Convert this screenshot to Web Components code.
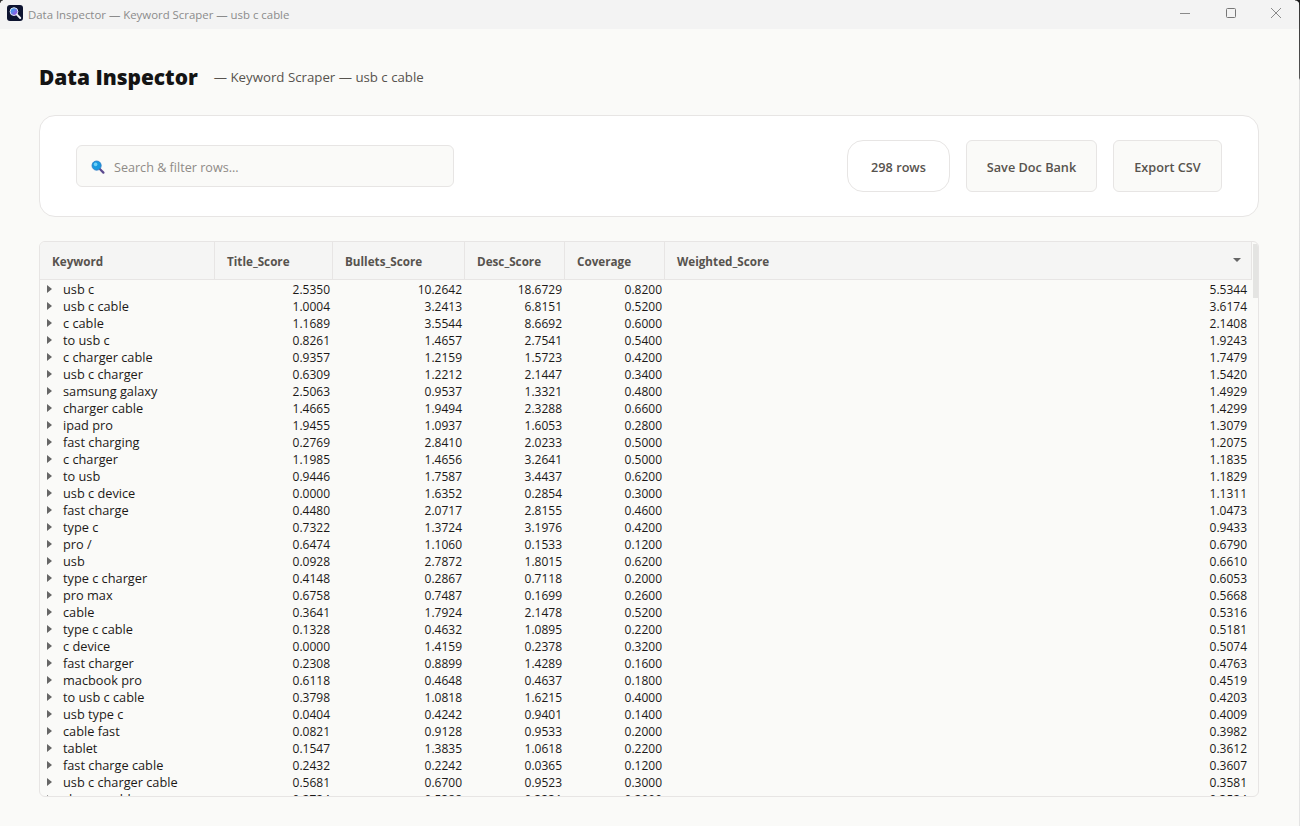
<!DOCTYPE html>
<html>
<head>
<meta charset="utf-8">
<title>Data Inspector</title>
<style>
  html, body { margin: 0; height: 100%; overflow: hidden; background: #fafaf8; }
  body { font-family: "Open Sans", "Noto Sans", sans-serif; }
</style>
</head>
<body>
<app-window label="Data Inspector — Keyword Scraper — usb c cable">
  <page-heading sub="— Keyword Scraper — usb c cable">Data Inspector</page-heading>
  <tool-bar rows="298 rows"></tool-bar>
  <data-grid></data-grid>
</app-window>

<script>
const ROWS = [
  ['usb c', '2.5350', '10.2642', '18.6729', '0.8200', '5.5344'],
  ['usb c cable', '1.0004', '3.2413', '6.8151', '0.5200', '3.6174'],
  ['c cable', '1.1689', '3.5544', '8.6692', '0.6000', '2.1408'],
  ['to usb c', '0.8261', '1.4657', '2.7541', '0.5400', '1.9243'],
  ['c charger cable', '0.9357', '1.2159', '1.5723', '0.4200', '1.7479'],
  ['usb c charger', '0.6309', '1.2212', '2.1447', '0.3400', '1.5420'],
  ['samsung galaxy', '2.5063', '0.9537', '1.3321', '0.4800', '1.4929'],
  ['charger cable', '1.4665', '1.9494', '2.3288', '0.6600', '1.4299'],
  ['ipad pro', '1.9455', '1.0937', '1.6053', '0.2800', '1.3079'],
  ['fast charging', '0.2769', '2.8410', '2.0233', '0.5000', '1.2075'],
  ['c charger', '1.1985', '1.4656', '3.2641', '0.5000', '1.1835'],
  ['to usb', '0.9446', '1.7587', '3.4437', '0.6200', '1.1829'],
  ['usb c device', '0.0000', '1.6352', '0.2854', '0.3000', '1.1311'],
  ['fast charge', '0.4480', '2.0717', '2.8155', '0.4600', '1.0473'],
  ['type c', '0.7322', '1.3724', '3.1976', '0.4200', '0.9433'],
  ['pro /', '0.6474', '1.1060', '0.1533', '0.1200', '0.6790'],
  ['usb', '0.0928', '2.7872', '1.8015', '0.6200', '0.6610'],
  ['type c charger', '0.4148', '0.2867', '0.7118', '0.2000', '0.6053'],
  ['pro max', '0.6758', '0.7487', '0.1699', '0.2600', '0.5668'],
  ['cable', '0.3641', '1.7924', '2.1478', '0.5200', '0.5316'],
  ['type c cable', '0.1328', '0.4632', '1.0895', '0.2200', '0.5181'],
  ['c device', '0.0000', '1.4159', '0.2378', '0.3200', '0.5074'],
  ['fast charger', '0.2308', '0.8899', '1.4289', '0.1600', '0.4763'],
  ['macbook pro', '0.6118', '0.4648', '0.4637', '0.1800', '0.4519'],
  ['to usb c cable', '0.3798', '1.0818', '1.6215', '0.4000', '0.4203'],
  ['usb type c', '0.0404', '0.4242', '0.9401', '0.1400', '0.4009'],
  ['cable fast', '0.0821', '0.9128', '0.9533', '0.2000', '0.3982'],
  ['tablet', '0.1547', '1.3835', '1.0618', '0.2200', '0.3612'],
  ['fast charge cable', '0.2432', '0.2242', '0.0365', '0.1200', '0.3607'],
  ['usb c charger cable', '0.5681', '0.6700', '0.9523', '0.3000', '0.3581'],
  ['charge cable', '0.2724', '0.5388', '0.3331', '0.2000', '0.3524'],
];
const COLUMNS = ['Keyword', 'Title_Score', 'Bullets_Score', 'Desc_Score', 'Coverage', 'Weighted_Score'];

// window frame with the fake title bar
class AppWindow extends HTMLElement {
  constructor() {
    super();
    this.attachShadow({ mode: 'open' });
    const label = this.getAttribute('label');
    this.shadowRoot.innerHTML = `
      <style>
        :host { display: flex; flex-direction: column; height: 826px; background: #fafaf8; position: relative; overflow: hidden; }
        .bar { flex: none; height: 29px; background: #f3f3f3; display: flex; align-items: center; padding-left: 7px; }
        .bar svg.logo { flex: none; width: 16px; height: 16px; margin: 0 5px 3px 0; }
        .name { flex: 1; font-size: 11.4px; color: #8b8b8b; white-space: nowrap; margin-bottom: 1px; }
        .ctl { flex: none; width: 45.5px; height: 26px; display: flex; align-items: center; justify-content: center; }
        .ctl svg { width: 12px; height: 12px; }
        .ctls { display: flex; margin: 0 1px 3px 0; }
        main { flex: 1; min-height: 0; display: flex; flex-direction: column; padding: 31px 41px 29px 39px; }
        .corner { position: absolute; top: 0; pointer-events: none; }
        .corner.l { left: 0; width: 3px; height: 3px; background: radial-gradient(circle at 100% 100%, transparent 2px, #2a2a2a 3px); }
        .corner.r { right: 0; width: 5px; height: 5px; background: radial-gradient(circle at 0 100%, transparent 4px, #1b1b1b 5px); }
        .edge { position: absolute; right: 0; top: 0; bottom: 0; width: 1px; background: linear-gradient(#333 0, #555 78px, #dedede 80px, #e4e4e4 100%); }
      </style>
      <div class="bar">
        <svg class="logo" viewBox="0 0 16 16">
          <rect width="16" height="16" rx="3" fill="#0d1330"/>
          <defs><linearGradient id="lg" x1="0" y1="0" x2="1" y2="1"><stop offset="0" stop-color="#22b8f0"/><stop offset="1" stop-color="#b13be0"/></linearGradient></defs>
          <circle cx="7" cy="6.6" r="3.9" fill="url(#lg)" stroke="#dfe6f2" stroke-width="1"/>
          <path d="M10 9.6 L13.2 13" stroke="#eef1f6" stroke-width="2" stroke-linecap="round"/>
        </svg>
        <div class="name">${label}</div>
        <div class="ctls">
          <div class="ctl"><svg viewBox="0 0 12 12"><path d="M1 6.5H11" stroke="#8a8a8a" fill="none"/></svg></div>
          <div class="ctl"><svg viewBox="0 0 12 12"><rect x="1.5" y="1.5" width="9" height="9" rx="1" stroke="#777" fill="none"/></svg></div>
          <div class="ctl"><svg viewBox="0 0 12 12"><path d="M1 1L11 11M11 1L1 11" stroke="#8a8a8a" fill="none"/></svg></div>
        </div>
      </div>
      <main><slot></slot></main>
      <div class="edge"></div>
      <div class="corner l"></div><div class="corner r"></div>
    `;
  }
}

class PageHeading extends HTMLElement {
  constructor() {
    super();
    this.attachShadow({ mode: 'open' });
    this.shadowRoot.innerHTML = `
      <style>
        :host { display: flex; align-items: center; height: 34px; margin-bottom: 21px; flex: none; }
        h1 { margin: 0; font: 800 20.9px "Open Sans", sans-serif; color: #141414; }
        span { margin-left: 16px; font-size: 13.25px; color: #57534e; }
      </style>
      <h1><slot></slot></h1><span>${this.getAttribute('sub')}</span>
    `;
  }
}

class ToolBar extends HTMLElement {
  constructor() {
    super();
    this.attachShadow({ mode: 'open' });
    this.shadowRoot.innerHTML = `
      <style>
        :host { display: flex; flex: none; align-items: center; box-sizing: border-box; height: 102px; margin-bottom: 24px;
          padding: 0 36px; background: #fff; border: 1px solid #e7e5e4; border-radius: 16px; }
        .search { box-sizing: border-box; width: 378px; height: 42px; display: flex; align-items: center; padding: 2px 0 0 14px;
          background: #fafaf8; border: 1px solid #e7e5e4; border-radius: 6px; font-size: 12.6px; color: #8f8b87; }
        .search svg { width: 14px; height: 14px; margin-right: 9px; flex: none; }
        .grow { flex: 1; }
        .pill, .btn { box-sizing: border-box; height: 52px; padding-top: 2px; display: flex; align-items: center; justify-content: center;
          font-size: 12.7px; font-weight: 600; color: #57534e; border: 1px solid #e7e5e4; }
        .pill { width: 103px; border-radius: 16px; background: #fff; }
        .btn { background: #fafaf8; border-radius: 6px; margin-left: 16px; }
      </style>
      <div class="search">
        <svg viewBox="0 0 14 14">
          <path d="M8.6 8.8L12.4 12.6" stroke="#5c4a8f" stroke-width="2.2" stroke-linecap="round"/>
          <circle cx="5.6" cy="5.6" r="4.6" fill="#1a9ae0" stroke="#2b78c4" stroke-width=".8"/>
          <circle cx="4.6" cy="4.4" r="1.8" fill="#6fd0f7"/>
        </svg>
        Search &amp; filter rows...
      </div>
      <div class="grow"></div>
      <div class="pill">${this.getAttribute('rows')}</div>
      <div class="btn" style="width:131px">Save Doc Bank</div>
      <div class="btn" style="width:109px">Export CSV</div>
    `;
  }
}

class DataGrid extends HTMLElement {
  constructor() {
    super();
    this.attachShadow({ mode: 'open' });
    const tmpl = '175px 118px 132px 100px 100px 587px';
    const head = COLUMNS.map((c, i) => `<div class="hc">${c}${i === 5 ? '<i class="sort"></i>' : ''}</div>`).join('');
    const body = ROWS.map(r => `<div class="row"><div class="kw"><i class="tw"></i>${r[0]}</div>${r.slice(1).map(v => `<div class="num">${v}</div>`).join('')}</div>`).join('');
    this.shadowRoot.innerHTML = `
      <style>
        :host { display: block; flex: 1; min-height: 0; box-sizing: border-box; position: relative; overflow: hidden;
          background: #fafaf8; border: 1px solid #e7e5e4; border-radius: 6px; font-size: 12px; color: #1c1917; }
        .head { display: grid; grid-template-columns: ${tmpl}; height: 37px; background: #f5f5f4; border-bottom: 1px solid #e7e5e4; width: 1212px; }
        .hc { display: flex; align-items: center; justify-content: space-between; padding: 0 12px; font-size: 11.7px; font-weight: 700; color: #57534e; border-right: 1px solid #e7e5e4; box-sizing: border-box; }
        .sort { width: 0; height: 0; border: 4px solid transparent; border-top: 4px solid #666; border-bottom: 0; margin-right: -2px; margin-top: -2px; }
        .row { display: grid; grid-template-columns: ${tmpl}; height: 17px; line-height: 17px; width: 1212px; white-space: nowrap; }
        .kw { display: flex; align-items: center; padding-left: 7px; font-size: 12.75px; }
        .tw { width: 0; height: 0; border: 4px solid transparent; border-left: 5px solid #666; border-right: 0; margin-right: 11px; margin-top: -2px; }
        .num { text-align: right; padding-right: 3px; }
        .num:last-child { padding-right: 5px; }
        .rows { padding-top: 1px; }
        .thumb { position: absolute; right: 0; top: 2px; width: 5px; height: 54px; background: #e4e4e2; }
      </style>
      <div class="head">${head}</div>
      <div class="rows">${body}</div>
      <div class="thumb"></div>
    `;
  }
}

customElements.define('app-window', AppWindow);
customElements.define('page-heading', PageHeading);
customElements.define('tool-bar', ToolBar);
customElements.define('data-grid', DataGrid);
</script>
</body>
</html>
